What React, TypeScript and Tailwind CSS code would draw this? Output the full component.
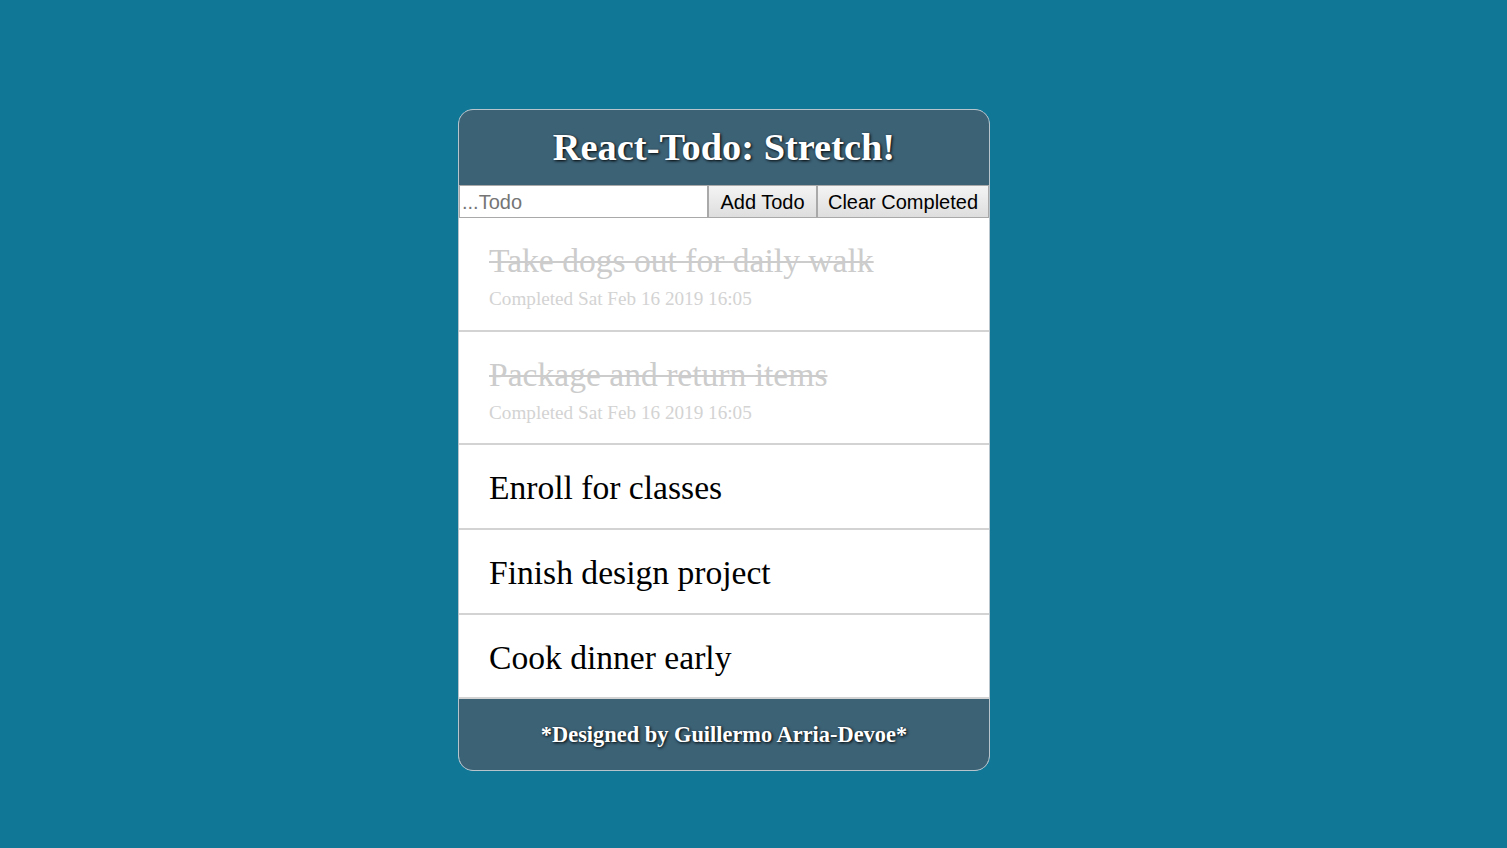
const todos = [
  { task: "Take dogs out for daily walk", completed: true, date: "Sat Feb 16 2019 16:05" },
  { task: "Package and return items", completed: true, date: "Sat Feb 16 2019 16:05" },
  { task: "Enroll for classes", completed: false },
  { task: "Finish design project", completed: false },
  { task: "Cook dinner early", completed: false },
];

const serif = "font-['Liberation_Serif','Times_New_Roman',serif]";
const sans = "font-['Liberation_Sans',Arial,sans-serif]";

function TodoItem({ task, completed, date }: { task: string; completed: boolean; date?: string }) {
  return (
    <div className="border-b-2 border-[#d3d3d3] bg-white px-[30px] pt-[22.85px] pb-[19.85px]">
      <p
        className={`${serif} text-[33.6px] leading-[40px] ${
          completed ? "text-[#cccccc] line-through decoration-2" : "text-black"
        }`}
      >
        {task}
      </p>
      {completed && (
        <p className={`${serif} mt-[7px] text-[19.2px] leading-[22px] text-[#d3d3d3]`}>Completed {date}</p>
      )}
    </div>
  );
}

export default function App() {
  return (
    <div className="flex min-h-[848px] bg-[#117797] pl-[458px] pt-[109px]">
      <div className="w-[532px] self-start overflow-hidden rounded-[15px] border border-[#b8c4cc] bg-white">
        <div className="flex h-[75px] items-center justify-center bg-[#3c6276]">
          <h1
            className={`${serif} text-[38.4px] font-bold text-white [text-shadow:1px_1px_3px_#000]`}
          >
            React-Todo: Stretch!
          </h1>
        </div>
        <div className={`${sans} flex h-[33px] text-[20px]`}>
          <input
            className="w-[249px] border border-[#a9a9a9] bg-white px-[2px] text-black placeholder:text-[#757575] outline-none"
            placeholder="...Todo"
          />
          <button className="w-[109px] border border-[#a9a9a9] bg-gradient-to-b from-[#f4f4f4] to-[#dedede] text-black">
            Add Todo
          </button>
          <button className="flex-1 border border-[#a9a9a9] bg-gradient-to-b from-[#f4f4f4] to-[#dedede] text-black">
            Clear Completed
          </button>
        </div>
        {todos.map((t) => (
          <TodoItem key={t.task} {...t} />
        ))}
        <div className="flex h-[71px] items-center justify-center bg-[#3c6276]">
          <p className={`${serif} text-[22.4px] font-bold text-white [text-shadow:1px_1px_3px_#000]`}>
            *Designed by Guillermo Arria-Devoe*
          </p>
        </div>
      </div>
    </div>
  );
}
